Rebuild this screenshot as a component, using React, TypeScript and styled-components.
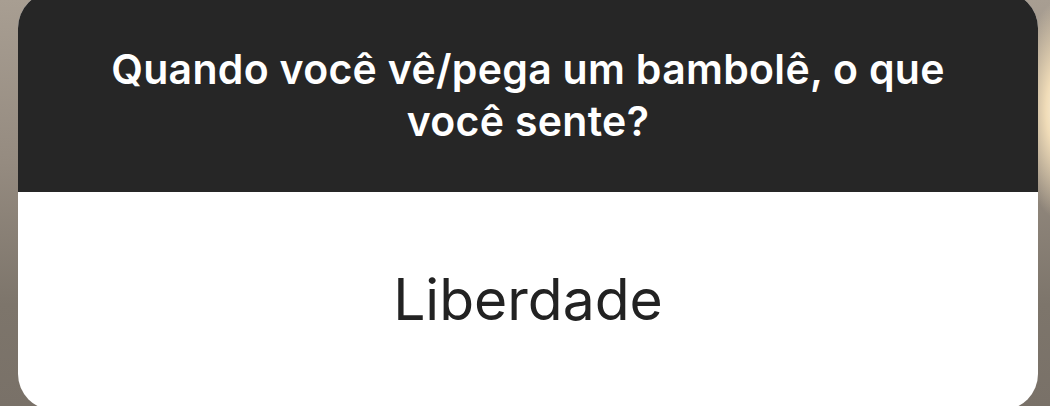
import React from 'react';
import styled, { createGlobalStyle } from 'styled-components';

const GlobalStyle = createGlobalStyle`
    html, body {
        margin: 0;
        padding: 0;
        width: 1050px;
        height: 406px;
        overflow: hidden;
    }
    body {
        font-family: Inter, "Noto Sans", "Liberation Sans", sans-serif;
        -webkit-font-smoothing: antialiased;
    }
`;

const Backdrop = styled.div`
    width: 1050px;
    height: 406px;
    overflow: hidden;
    box-sizing: border-box;
    padding-left: 18px;
    background:
        radial-gradient(ellipse 40px 110px at 1060px 110px, #fff4dc 0%, #f0dcb8 35%, rgba(200, 180, 150, 0) 100%),
        linear-gradient(180deg, #a89e92 0%, #958b80 40%, #7d756b 75%, #797168 100%);
    display: flex;
`;

const Card = styled.div`
    width: 1020px;
    height: 418px;
    margin-top: -8px;
    border-radius: 36px;
    overflow: hidden;
    display: flex;
    flex-direction: column;
    background: #ffffff;
`;

const Question = styled.div`
    height: 200px;
    flex-shrink: 0;
    box-sizing: border-box;
    padding: 51px 80px 0;
    background: #262626;
    color: #ffffff;
    text-align: center;
    font-size: 41px;
    font-weight: 600;
    line-height: 52px;
    letter-spacing: 0.3px;
`;

const Answer = styled.div`
    flex: 1;
    box-sizing: border-box;
    padding-top: 73px;
    text-align: center;
    color: #222222;
    font-size: 57px;
    font-weight: 400;
    line-height: 70px;
`;

export default function App() {
    return (
        <>
            <GlobalStyle />
            <Backdrop>
                <Card>
                    <Question>Quando você vê/pega um bambolê, o que você sente?</Question>
                    <Answer>Liberdade</Answer>
                </Card>
            </Backdrop>
        </>
    );
}
